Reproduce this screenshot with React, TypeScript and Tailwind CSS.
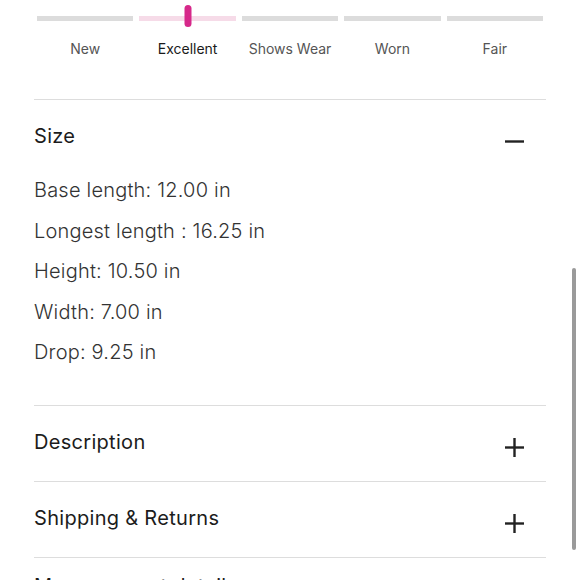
const grades = ["New", "Excellent", "Shows Wear", "Worn", "Fair"];
const selected = 1;

const sizes = [
  "Base length: 12.00 in",
  "Longest length : 16.25 in",
  "Height: 10.50 in",
  "Width: 7.00 in",
  "Drop: 9.25 in",
];

const Toggle = ({ open }: { open?: boolean }) => (
  <svg width="19" height="19" viewBox="0 0 19 19" className="text-[#222]">
    <line x1="0" y1="9.5" x2="19" y2="9.5" stroke="currentColor" strokeWidth="2.4" />
    {!open && <line x1="9.5" y1="0" x2="9.5" y2="19" stroke="currentColor" strokeWidth="2.4" />}
  </svg>
);

const Header = ({ title, open }: { title: string; open?: boolean }) => (
  <div className="h-[75px] pb-[4px] flex items-center justify-between">
    <h3 className="text-[20px] tracking-[0.3px] font-normal text-[#1c1c1c]">{title}</h3>
    <div className="mt-3 mr-[22px]">
      <Toggle open={open} />
    </div>
  </div>
);

export default function App() {
  return (
    <div
      className="relative w-[580px] h-[580px] overflow-hidden bg-white"
      style={{ fontFamily: "Inter, 'Noto Sans', sans-serif" }}
    >
      <div className="px-[34px]">
        <div className="h-[99px] pt-[16px]">
          <div className="flex gap-[6px] mx-[3px]">
            {grades.map((g, i) => (
              <div
                key={g}
                className={`relative flex-1 h-[5px] ${i === selected ? "bg-[#f6dbe8]" : "bg-[#dcdcdc]"}`}
              >
                {i === selected && (
                  <div className="absolute left-1/2 -translate-x-1/2 top-[-11px] w-[7px] h-[22px] rounded-full bg-[#d6288a]" />
                )}
              </div>
            ))}
          </div>
          <div className="flex gap-[6px] mx-[3px] mt-[17px]">
            {grades.map((g, i) => (
              <div
                key={g}
                className={`flex-1 text-center text-[14px] ${i === selected ? "text-[#1a1a1a]" : "text-[#555]"}`}
              >
                {g}
              </div>
            ))}
          </div>
        </div>

        <section className="border-t border-[#dddddd]">
          <Header title="Size" open />
          <div className="flex flex-col gap-[10.5px] pb-[38px]">
            {sizes.map((s) => (
              <p key={s} className="leading-[30px] text-[20px] tracking-[0.2px] font-light text-[#333]">
                {s}
              </p>
            ))}
          </div>
        </section>

        <section className="border-t border-[#dddddd]">
          <Header title="Description" />
        </section>
        <section className="border-t border-[#dddddd]">
          <Header title="Shipping & Returns" />
        </section>
        <section className="border-t border-[#dddddd]">
          <div className="h-[56px] flex items-center">
            <h3 className="text-[20px] tracking-[0.3px] font-normal text-[#1c1c1c]">Measurement details</h3>
          </div>
        </section>
      </div>

      <div className="absolute right-[4px] top-[268px] w-[4px] h-[282px] rounded-full bg-[#9a9a9a]" />
    </div>
  );
}
